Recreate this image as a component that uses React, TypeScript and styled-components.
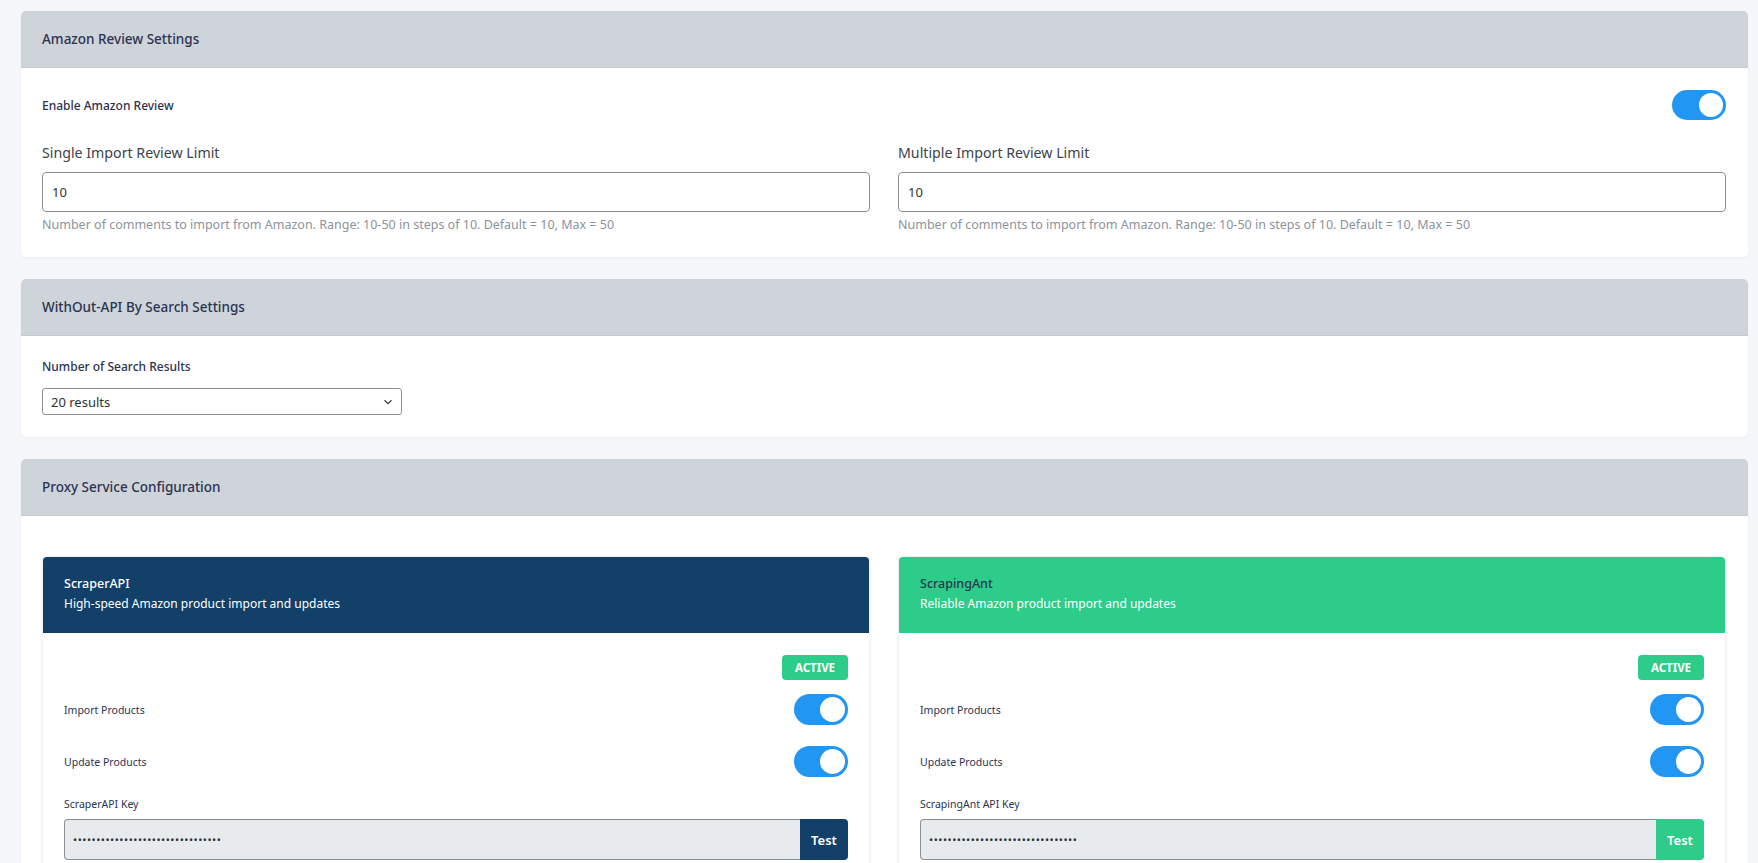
import styled, { createGlobalStyle } from 'styled-components'

const GlobalStyle = createGlobalStyle`
    html, body {
        margin: 0;
        padding: 0;
        overflow: hidden;
        background: #f6f7fb;
        font-family: "Noto Sans", "Open Sans", sans-serif;
    }
    * {
        box-sizing: border-box;
    }
`

const StyledPage = styled.div`
    display: flex;
    flex-direction: column;
    gap: 22px;
    padding: 11px 10px 0 21px;
    min-height: 863px;
`

const StyledCard = styled.section`
    background: #fff;
    border-radius: 5px;
    box-shadow: 0 1px 3px rgba(30, 40, 60, 0.05);
    overflow: hidden;
`

const StyledCardHeader = styled.header`
    height: 57px;
    display: flex;
    align-items: center;
    padding: 0 21px;
    background: #cfd4db;
    border-bottom: 1px solid #c4c9d0;
`

const StyledCardTitle = styled.h2`
    margin: 0;
    font-size: 13.5px;
    font-weight: 500;
    color: #2b3350;
`

const StyledCardBody = styled.div<{ $pad: string }>`
    padding: ${({ $pad }) => $pad};
`

const StyledToggleRow = styled.div<{ $gap: number }>`
    display: flex;
    align-items: center;
    justify-content: space-between;
    margin-bottom: ${({ $gap }) => $gap}px;
`

const StyledSmallLabel = styled.span<{ $size: number; $weight: number }>`
    font-size: ${({ $size }) => $size}px;
    font-weight: ${({ $weight }) => $weight};
    color: #2b3350;
`

const StyledSwitch = styled.span<{ $h: number }>`
    position: relative;
    display: inline-block;
    width: 54px;
    height: ${({ $h }) => $h}px;
    border-radius: 999px;
    background: #2196f3;

    &::after {
        content: '';
        position: absolute;
        top: 3px;
        right: 3px;
        width: ${({ $h }) => $h - 6}px;
        height: ${({ $h }) => $h - 6}px;
        border-radius: 50%;
        background: #fff;
    }
`

const StyledTwoCols = styled.div`
    display: grid;
    grid-template-columns: 1fr 1fr;
    gap: 28px;
`

const StyledField = styled.div`
    display: flex;
    flex-direction: column;
`

const StyledFieldLabel = styled.label`
    font-size: 14.2px;
    line-height: 20px;
    color: #3c434a;
    margin-bottom: 9px;
`

const StyledTextInput = styled.input`
    height: 40px;
    padding: 0 9px;
    border: 1px solid #8c8f94;
    border-radius: 4px;
    font-family: inherit;
    font-size: 13px;
    color: #2c3338;
    background: #fff;
    outline: none;
`

const StyledHelp = styled.p`
    margin: 5px 0 0;
    font-size: 12.5px;
    line-height: 16px;
    color: #8c939d;
`

const StyledSelectLabel = styled.div`
    font-size: 12px;
    line-height: 16px;
    font-weight: 500;
    color: #2b3350;
    margin-bottom: 13px;
`

const StyledSelectWrap = styled.div`
    position: relative;
    width: 360px;
`

const StyledSelect = styled.select`
    width: 100%;
    height: 27px;
    padding: 0 28px 0 8px;
    appearance: none;
    border: 1px solid #8c8f94;
    border-radius: 3px;
    background: #fff;
    font-family: inherit;
    font-size: 13px;
    color: #2c3338;
`

const StyledChevron = styled.svg`
    position: absolute;
    right: 9px;
    top: 9px;
    pointer-events: none;
`

const StyledService = styled.div`
    background: #fff;
    border: 1px solid #f1f2f4;
    border-radius: 5px;
    box-shadow: 0 1px 4px rgba(30, 40, 60, 0.06);
    overflow: hidden;
`

const StyledServiceHeader = styled.div<{ $bg: string; $titleColor: string }>`
    background: ${({ $bg }) => $bg};
    padding: 17px 21px 19px;
    font-size: 12px;
    line-height: 20px;
    color: #fff;

    strong {
        display: block;
        font-size: 12.5px;
        font-weight: 500;
        color: ${({ $titleColor }) => $titleColor};
    }
`

const StyledServiceBody = styled.div`
    padding: 22px 21px 30px;
`

const StyledBadgeRow = styled.div`
    display: flex;
    justify-content: flex-end;
    margin-bottom: 14px;
`

const StyledBadge = styled.span`
    display: inline-flex;
    align-items: center;
    justify-content: center;
    width: 66px;
    height: 25px;
    border-radius: 4px;
    background: #2ecc8a;
    color: #fff;
    font-size: 11.5px;
    font-weight: 700;
`

const StyledKeyLabel = styled.div`
    font-size: 10.5px;
    line-height: 15px;
    color: #2b3350;
    margin-bottom: 7px;
`

const StyledKeyGroup = styled.div`
    display: flex;
    height: 41px;
`

const StyledKeyInput = styled.input`
    flex: 1;
    min-width: 0;
    padding: 0 8px;
    border: 1px solid #8c8f94;
    border-right: none;
    border-radius: 4px 0 0 4px;
    background: #e8ebee;
    font-family: inherit;
    font-size: 11px;
    letter-spacing: 0.5px;
    color: #2c3338;
    outline: none;
`

const StyledTestButton = styled.button<{ $bg: string }>`
    width: 48px;
    border: none;
    border-radius: 0 4px 4px 0;
    background: ${({ $bg }) => $bg};
    color: #fff;
    font-family: inherit;
    font-size: 13px;
    font-weight: 600;
`

const services = [
    {
        name: 'ScraperAPI',
        desc: 'High-speed Amazon product import and updates',
        keyLabel: 'ScraperAPI Key',
        color: '#124068',
        titleColor: '#ffffff',
    },
    {
        name: 'ScrapingAnt',
        desc: 'Reliable Amazon product import and updates',
        keyLabel: 'ScrapingAnt API Key',
        color: '#2ecc8a',
        titleColor: '#1f3a4d',
    },
]

const HELP = 'Number of comments to import from Amazon. Range: 10-50 in steps of 10. Default = 10, Max = 50'

export default function App() {
    return (
        <>
            <GlobalStyle />
            <StyledPage>
                <StyledCard>
                    <StyledCardHeader>
                        <StyledCardTitle>Amazon Review Settings</StyledCardTitle>
                    </StyledCardHeader>
                    <StyledCardBody $pad="22px 22px 24px 21px">
                        <StyledToggleRow $gap={23}>
                            <StyledSmallLabel $size={12} $weight={500}>Enable Amazon Review</StyledSmallLabel>
                            <StyledSwitch $h={30} />
                        </StyledToggleRow>
                        <StyledTwoCols>
                            <StyledField>
                                <StyledFieldLabel>Single Import Review Limit</StyledFieldLabel>
                                <StyledTextInput defaultValue="10" />
                                <StyledHelp>{HELP}</StyledHelp>
                            </StyledField>
                            <StyledField>
                                <StyledFieldLabel>Multiple Import Review Limit</StyledFieldLabel>
                                <StyledTextInput defaultValue="10" />
                                <StyledHelp>{HELP}</StyledHelp>
                            </StyledField>
                        </StyledTwoCols>
                    </StyledCardBody>
                </StyledCard>

                <StyledCard>
                    <StyledCardHeader>
                        <StyledCardTitle>WithOut-API By Search Settings</StyledCardTitle>
                    </StyledCardHeader>
                    <StyledCardBody $pad="23px 21px 22px">
                        <StyledSelectLabel>Number of Search Results</StyledSelectLabel>
                        <StyledSelectWrap>
                            <StyledSelect defaultValue="20">
                                <option value="10">10 results</option>
                                <option value="20">20 results</option>
                                <option value="30">30 results</option>
                            </StyledSelect>
                            <StyledChevron width="10" height="10" viewBox="0 0 10 10">
                                <path d="M1.5 3.2 L5 6.7 L8.5 3.2" fill="none" stroke="#3c434a" strokeWidth="1.3" />
                            </StyledChevron>
                        </StyledSelectWrap>
                    </StyledCardBody>
                </StyledCard>

                <StyledCard>
                    <StyledCardHeader>
                        <StyledCardTitle>Proxy Service Configuration</StyledCardTitle>
                    </StyledCardHeader>
                    <StyledCardBody $pad="40px 22px 24px 21px">
                        <StyledTwoCols>
                            {services.map((s) => (
                                <StyledService key={s.name}>
                                    <StyledServiceHeader $bg={s.color} $titleColor={s.titleColor}>
                                        <strong>{s.name}</strong>
                                        {s.desc}
                                    </StyledServiceHeader>
                                    <StyledServiceBody>
                                        <StyledBadgeRow>
                                            <StyledBadge>ACTIVE</StyledBadge>
                                        </StyledBadgeRow>
                                        <StyledToggleRow $gap={21}>
                                            <StyledSmallLabel $size={10.5} $weight={400}>Import Products</StyledSmallLabel>
                                            <StyledSwitch $h={31} />
                                        </StyledToggleRow>
                                        <StyledToggleRow $gap={20}>
                                            <StyledSmallLabel $size={10.5} $weight={400}>Update Products</StyledSmallLabel>
                                            <StyledSwitch $h={31} />
                                        </StyledToggleRow>
                                        <StyledKeyLabel>{s.keyLabel}</StyledKeyLabel>
                                        <StyledKeyGroup>
                                            <StyledKeyInput type="password" readOnly value="abcdefghijklmnopqrstuvwxyz012345" />
                                            <StyledTestButton $bg={s.color}>Test</StyledTestButton>
                                        </StyledKeyGroup>
                                    </StyledServiceBody>
                                </StyledService>
                            ))}
                        </StyledTwoCols>
                    </StyledCardBody>
                </StyledCard>
            </StyledPage>
        </>
    )
}
